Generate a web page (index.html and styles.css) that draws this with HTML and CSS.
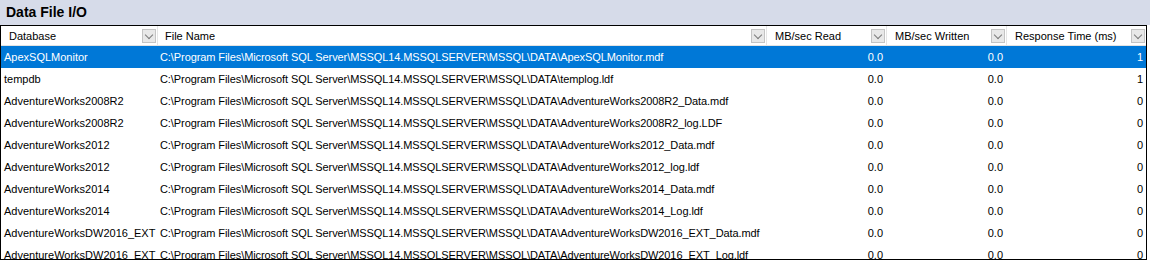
FILE: index.html
```html
<!DOCTYPE html>
<html>
<head>
<meta charset="utf-8">
<link rel="stylesheet" href="styles.css">
</head>
<body>
<div class="titlebar">Data File I/O</div>
<div class="grid">
  <div class="row head">
    <div class="cell c1"><span class="label">Database</span><span class="dd"></span></div>
    <div class="cell c2"><span class="label">File Name</span><span class="dd"></span></div>
    <div class="cell c3"><span class="label">MB/sec Read</span><span class="dd"></span></div>
    <div class="cell c4"><span class="label">MB/sec Written</span><span class="dd"></span></div>
    <div class="cell c5"><span class="label">Response Time (ms)</span><span class="dd"></span></div>
  </div>
  <div class="row sel">
    <div class="cell c1">ApexSQLMonitor</div>
    <div class="cell c2">C:\Program Files\Microsoft SQL Server\MSSQL14.MSSQLSERVER\MSSQL\DATA\ApexSQLMonitor.mdf</div>
    <div class="cell c3 num">0.0</div>
    <div class="cell c4 num">0.0</div>
    <div class="cell c5 num">1</div>
  </div>
  <div class="row">
    <div class="cell c1">tempdb</div>
    <div class="cell c2">C:\Program Files\Microsoft SQL Server\MSSQL14.MSSQLSERVER\MSSQL\DATA\templog.ldf</div>
    <div class="cell c3 num">0.0</div>
    <div class="cell c4 num">0.0</div>
    <div class="cell c5 num">1</div>
  </div>
  <div class="row">
    <div class="cell c1">AdventureWorks2008R2</div>
    <div class="cell c2">C:\Program Files\Microsoft SQL Server\MSSQL14.MSSQLSERVER\MSSQL\DATA\AdventureWorks2008R2_Data.mdf</div>
    <div class="cell c3 num">0.0</div>
    <div class="cell c4 num">0.0</div>
    <div class="cell c5 num">0</div>
  </div>
  <div class="row">
    <div class="cell c1">AdventureWorks2008R2</div>
    <div class="cell c2">C:\Program Files\Microsoft SQL Server\MSSQL14.MSSQLSERVER\MSSQL\DATA\AdventureWorks2008R2_log.LDF</div>
    <div class="cell c3 num">0.0</div>
    <div class="cell c4 num">0.0</div>
    <div class="cell c5 num">0</div>
  </div>
  <div class="row">
    <div class="cell c1">AdventureWorks2012</div>
    <div class="cell c2">C:\Program Files\Microsoft SQL Server\MSSQL14.MSSQLSERVER\MSSQL\DATA\AdventureWorks2012_Data.mdf</div>
    <div class="cell c3 num">0.0</div>
    <div class="cell c4 num">0.0</div>
    <div class="cell c5 num">0</div>
  </div>
  <div class="row">
    <div class="cell c1">AdventureWorks2012</div>
    <div class="cell c2">C:\Program Files\Microsoft SQL Server\MSSQL14.MSSQLSERVER\MSSQL\DATA\AdventureWorks2012_log.ldf</div>
    <div class="cell c3 num">0.0</div>
    <div class="cell c4 num">0.0</div>
    <div class="cell c5 num">0</div>
  </div>
  <div class="row">
    <div class="cell c1">AdventureWorks2014</div>
    <div class="cell c2">C:\Program Files\Microsoft SQL Server\MSSQL14.MSSQLSERVER\MSSQL\DATA\AdventureWorks2014_Data.mdf</div>
    <div class="cell c3 num">0.0</div>
    <div class="cell c4 num">0.0</div>
    <div class="cell c5 num">0</div>
  </div>
  <div class="row">
    <div class="cell c1">AdventureWorks2014</div>
    <div class="cell c2">C:\Program Files\Microsoft SQL Server\MSSQL14.MSSQLSERVER\MSSQL\DATA\AdventureWorks2014_Log.ldf</div>
    <div class="cell c3 num">0.0</div>
    <div class="cell c4 num">0.0</div>
    <div class="cell c5 num">0</div>
  </div>
  <div class="row">
    <div class="cell c1">AdventureWorksDW2016_EXT</div>
    <div class="cell c2">C:\Program Files\Microsoft SQL Server\MSSQL14.MSSQLSERVER\MSSQL\DATA\AdventureWorksDW2016_EXT_Data.mdf</div>
    <div class="cell c3 num">0.0</div>
    <div class="cell c4 num">0.0</div>
    <div class="cell c5 num">0</div>
  </div>
  <div class="row">
    <div class="cell c1">AdventureWorksDW2016_EXT</div>
    <div class="cell c2">C:\Program Files\Microsoft SQL Server\MSSQL14.MSSQLSERVER\MSSQL\DATA\AdventureWorksDW2016_EXT_Log.ldf</div>
    <div class="cell c3 num">0.0</div>
    <div class="cell c4 num">0.0</div>
    <div class="cell c5 num">0</div>
  </div>
</div>
</body>
</html>
```
FILE: styles.css
```css
html, body {
  margin: 0;
  padding: 0;
  background: #ffffff;
  overflow: hidden;
}
body {
  width: 1150px;
  height: 260px;
  font-family: "Liberation Sans", Arial, sans-serif;
  font-size: 11px;
  color: #000000;
}
.titlebar {
  height: 25px;
  background: #d6dbe9;
  font-weight: bold;
  font-size: 14px;
  line-height: 24px;
  padding-left: 6px;
  color: #000000;
  box-sizing: border-box;
}
.grid {
  width: 1147px;
  height: 235px;
  border: 1px solid #000000;
  box-sizing: border-box;
  overflow: hidden;
  background: #ffffff;
}
.row {
  display: flex;
  height: 22px;
  align-items: center;
  white-space: nowrap;
}
.row.head {
  height: 20px;
  border-bottom: 1px solid #e3e3e3;
  box-sizing: border-box;
  color: #000000;
}
.row.sel {
  background: #0078d7;
  color: #ffffff;
}
.cell {
  box-sizing: border-box;
  overflow: hidden;
  height: 100%;
  display: flex;
  align-items: center;
}
.c1 { width: 157px; padding-left: 3px; }
.c2 { width: 609px; padding-left: 2px; letter-spacing: -0.085px; }
.c3 { width: 120px; }
.c4 { width: 120px; }
.c5 { width: 139px; }
.num {
  justify-content: flex-end;
  padding-right: 4px;
}
.c5.num { padding-right: 3px; }
.head .cell {
  border-right: 1px solid #e5e5e5;
  padding-left: 8px;
  padding-right: 1px;
  justify-content: space-between;
  letter-spacing: 0;
}
.head .c5 { border-right: none; padding-right: 1px; }
.head .c2 { padding-left: 7px; }
.label {
  flex: 1;
  overflow: hidden;
}
.dd {
  width: 12px;
  height: 12px;
  border: 1px solid #c4c4c4;
  background: #e8e8e8;
  position: relative;
  flex: none;
  margin-right: 0;
}
.dd::after {
  content: "";
  position: absolute;
  left: 3px;
  top: 2px;
  width: 5px;
  height: 5px;
  border-right: 1px solid #7a7a7a;
  border-bottom: 1px solid #7a7a7a;
  transform: rotate(45deg);
}
```
